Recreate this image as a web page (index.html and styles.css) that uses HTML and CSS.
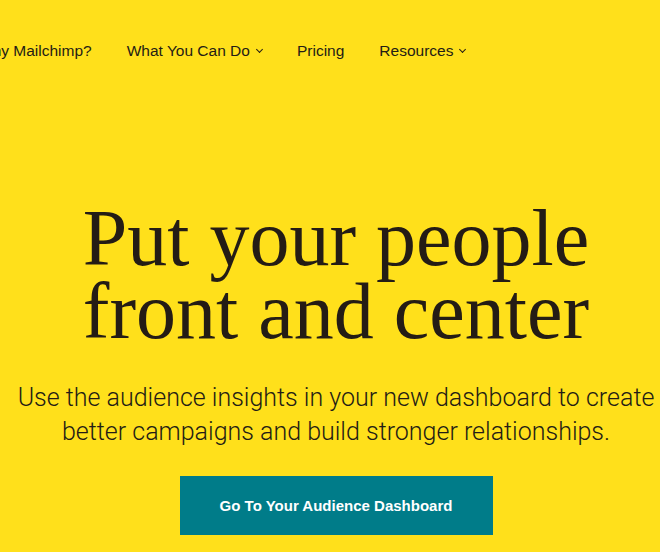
FILE: index.html
```html
<!DOCTYPE html>
<html lang="en">
<head>
    <meta charset="UTF-8">
    <meta name="viewport" content="width=device-width, initial-scale=1.0">
    <title>Mailchimp - Audience Dashboard</title>
    <link rel="stylesheet" href="styles.css">
</head>
<body>
    <nav class="nav">
        <a class="nav-link" href="#">Why Mailchimp?</a>
        <a class="nav-link" href="#">What You Can Do <span class="chevron"></span></a>
        <a class="nav-link" href="#">Pricing</a>
        <a class="nav-link" href="#">Resources <span class="chevron"></span></a>
    </nav>

    <main class="hero">
        <h1 class="hero-title">Put your people<br>front and center</h1>
        <p class="hero-text">Use the audience insights in your new dashboard to create better campaigns and build stronger relationships.</p>
        <a class="hero-button" href="#">Go To Your Audience Dashboard</a>
    </main>
</body>
</html>
```

FILE: styles.css
```css
body {
    background-color: #ffe01b;
    color: #241c15;
    font-family: 'Liberation Sans', Arial, sans-serif;
    margin: 0;
    padding: 0;
    overflow: hidden;
}

/* top navigation, first item runs off the left edge */
.nav {
    display: flex;
    align-items: center;
    gap: 35px;
    margin-left: -22px;
    padding-top: 41px;
    height: 20px;
}

.nav-link {
    color: #241c15;
    text-decoration: none;
    font-size: 15.5px;
    line-height: 20px;
    white-space: nowrap;
    display: flex;
    align-items: center;
}

.chevron {
    display: inline-block;
    width: 4px;
    height: 4px;
    border-right: 1.6px solid #241c15;
    border-bottom: 1.6px solid #241c15;
    transform: rotate(45deg);
    margin-left: 7px;
    margin-top: -3px;
}

.hero {
    display: flex;
    flex-direction: column;
    align-items: center;
    text-align: center;
    padding-left: 12px;
    padding-top: 141px;
}

.hero-title {
    font-family: 'Liberation Serif', 'Times New Roman', serif;
    font-weight: normal;
    font-size: 80px;
    line-height: 73px;
    margin: 0;
}

.hero-text {
    font-family: Roboto, sans-serif;
    font-weight: 300;
    font-size: 25px;
    line-height: 34px;
    max-width: 650px;
    margin: 33px 0 0;
}

.hero-button {
    display: block;
    margin-top: 27px;
    width: 313px;
    height: 59px;
    line-height: 59px;
    background-color: #007c89;
    color: #fff;
    font-weight: bold;
    font-size: 15px;
    text-decoration: none;
}
```
